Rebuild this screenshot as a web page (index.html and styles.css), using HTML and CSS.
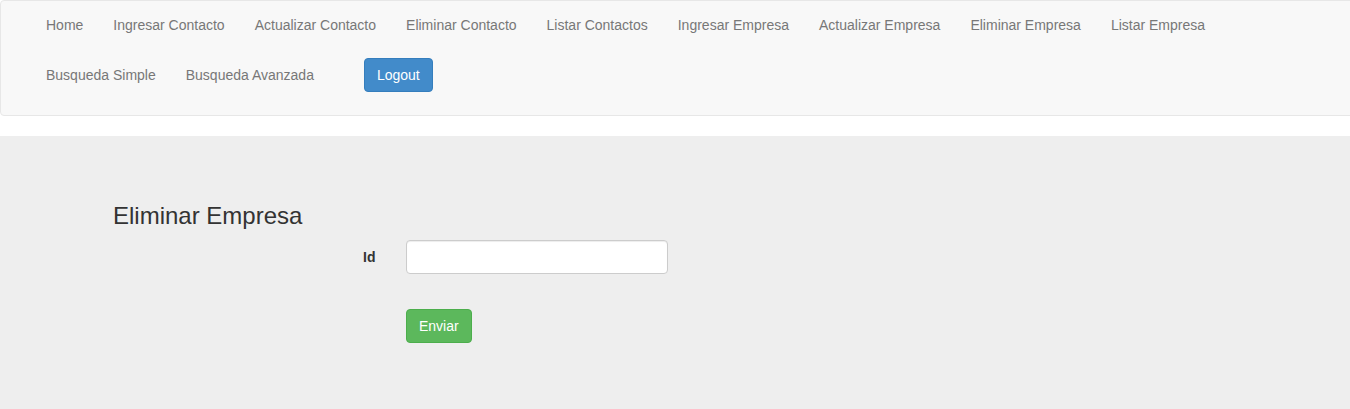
FILE: index.html
```html
<!DOCTYPE html>
<html lang="es">
<head>
<meta charset="utf-8">
<title>Eliminar Empresa</title>
<link rel="stylesheet" href="styles.css">
</head>
<body>
<nav class="navbar">
  <div class="container-fluid">
    <ul class="nav">
      <li><a href="#">Home</a></li>
      <li><a href="#">Ingresar Contacto</a></li>
      <li><a href="#">Actualizar Contacto</a></li>
      <li><a href="#">Eliminar Contacto</a></li>
      <li><a href="#">Listar Contactos</a></li>
      <li><a href="#">Ingresar Empresa</a></li>
      <li><a href="#">Actualizar Empresa</a></li>
      <li><a href="#">Eliminar Empresa</a></li>
      <li><a href="#">Listar Empresa</a></li>
      <li><a href="#">Busqueda Simple</a></li>
      <li><a href="#">Busqueda Avanzada</a></li>
      <li class="nav-form"><button class="btn btn-primary" type="button">Logout</button></li>
    </ul>
  </div>
</nav>
<main class="jumbotron">
  <h3 class="title">Eliminar Empresa</h3>
  <form class="form">
    <div class="form-row">
      <label class="label" for="id">Id</label>
      <input class="input" id="id" type="text">
    </div>
    <div class="form-row">
      <span class="label"></span>
      <button class="btn btn-success" type="button">Enviar</button>
    </div>
  </form>
</main>
</body>
</html>
```
FILE: styles.css
```css
* { box-sizing: border-box; }
html, body { margin: 0; padding: 0; }
body {
  font-family: "Liberation Sans", Arial, sans-serif;
  font-size: 14px;
  line-height: 1.428571;
  color: #333;
  background: #fff;
  overflow: hidden;
  height: 409px;
}
.navbar {
  background: #f8f8f8;
  border: 1px solid #e7e7e7;
  border-radius: 4px;
  height: 116px;
  margin-right: -6px;
  margin-bottom: 20px;
}
.container-fluid { padding: 0 30px; margin-top: -1px; }
.nav {
  list-style: none;
  margin: 0;
  padding: 0;
  display: flex;
  flex-wrap: wrap;
  max-width: 1240px;
}
.nav li { display: block; }
.nav a {
  display: block;
  padding: 15px;
  line-height: 20px;
  color: #777;
  text-decoration: none;
}
.nav-form { padding: 8px 0 0 35px; }
.btn {
  display: inline-block;
  font-family: inherit;
  font-size: 14px;
  line-height: 20px;
  padding: 6px 12px;
  border: 1px solid transparent;
  border-radius: 4px;
  color: #fff;
  cursor: pointer;
}
.btn-primary { background: #428bca; border-color: #357ebd; }
.btn-success { background: #5cb85c; border-color: #4cae4c; }
.jumbotron {
  background: #eee;
  height: 273px;
  padding: 67px 0 0 113px;
}
.title {
  margin: 0;
  font-size: 24px;
  font-weight: 500;
  line-height: 26.4px;
  color: #333;
}
.form { margin-top: 11px; padding-left: 250px; }
.form-row {
  display: flex;
  align-items: center;
  margin-bottom: 35px;
}
.label {
  width: 43px;
  padding-top: 2px;
  font-weight: bold;
  color: #333;
}
.input {
  width: 262px;
  height: 34px;
  border: 1px solid #ccc;
  border-radius: 4px;
  background: #fff;
  padding: 6px 12px;
  font-family: inherit;
  font-size: 14px;
  box-shadow: inset 0 1px 1px rgba(0,0,0,.075);
}
```
